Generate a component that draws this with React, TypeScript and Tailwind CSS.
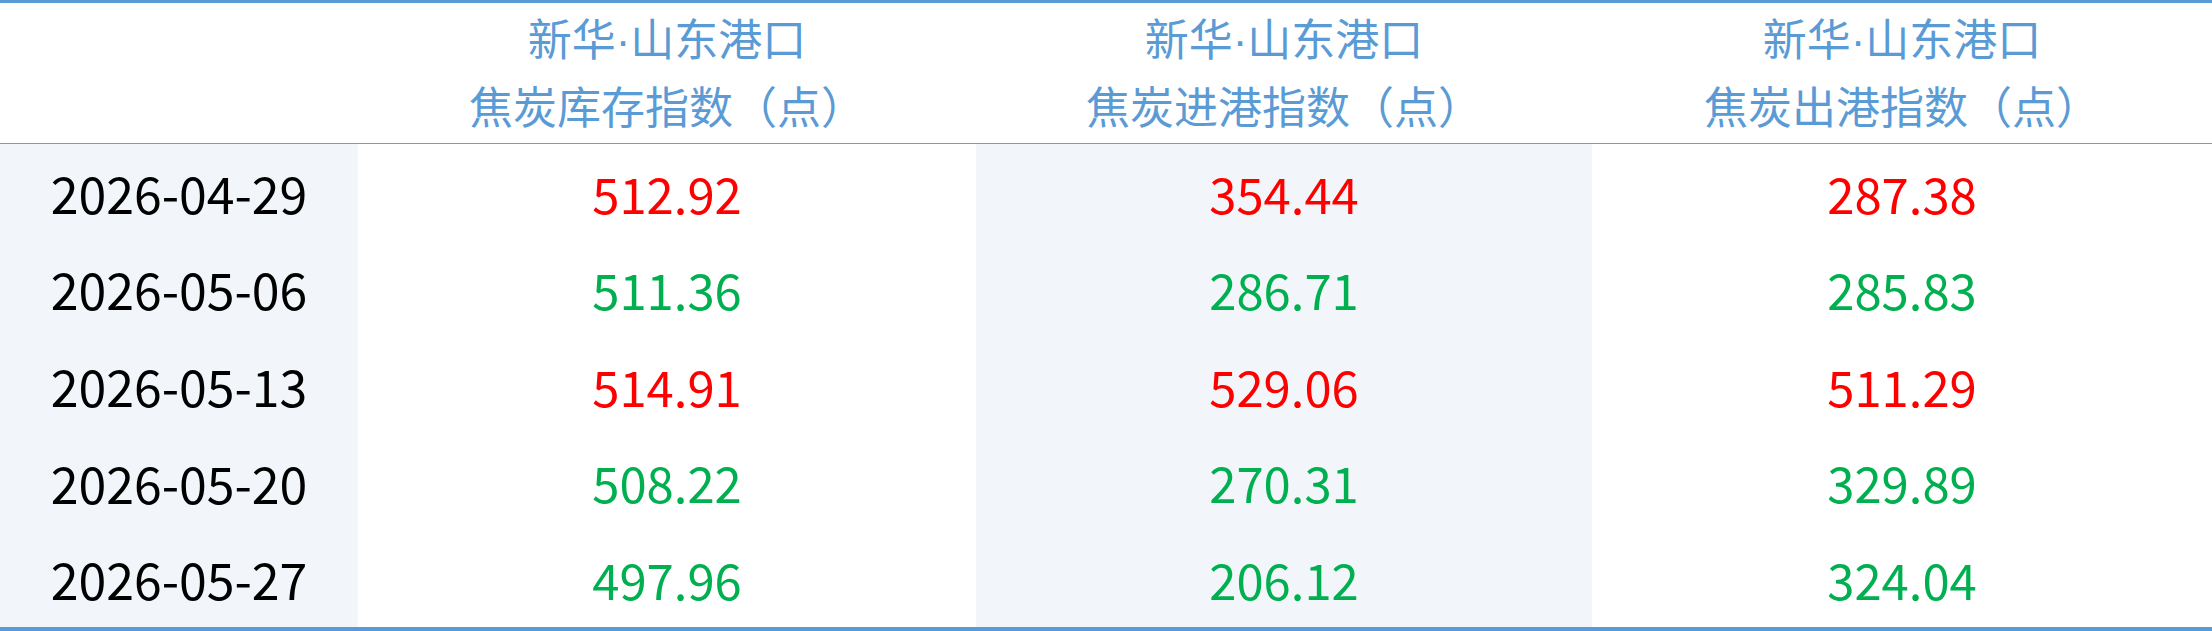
const headers = [
  ['新华·山东港口', '焦炭库存指数（点）'],
  ['新华·山东港口', '焦炭进港指数（点）'],
  ['新华·山东港口', '焦炭出港指数（点）'],
];

const rows: [string, number[], boolean][] = [
  ['2026-04-29', [512.92, 354.44, 287.38], true],
  ['2026-05-06', [511.36, 286.71, 285.83], false],
  ['2026-05-13', [514.91, 529.06, 511.29], true],
  ['2026-05-20', [508.22, 270.31, 329.89], false],
  ['2026-05-27', [497.96, 206.12, 324.04], false],
];

const font = { fontFamily: '"Noto Sans CJK SC", "Noto Sans", sans-serif' };
const headFont = { fontFamily: '"Liberation Sans", "Noto Sans CJK SC", sans-serif' };

export default function App() {
  return (
    <div
      className="w-[2212px] h-[631px] bg-white border-t-[3px] border-b-4 border-[#5b9bd5] flex flex-col"
      style={font}
    >
      <div className="grid grid-cols-[358px_618px_616px_620px] h-[141px] border-b border-[#6a9fd4] shrink-0">
        <div />
        {headers.map((h, i) => (
          <div
            key={i}
            className="flex flex-col items-center justify-center text-[44px] leading-[68px] text-[#5b9bd5] pt-[3px]"
            style={headFont}
          >
            <span>{h[0]}</span>
            <span>{h[1]}</span>
          </div>
        ))}
      </div>
      <div className="flex-1 grid grid-cols-[358px_618px_616px_620px] grid-rows-5">
        {rows.map(([date, vals, up]) => (
          <div key={date} className="contents">
            <div className="bg-[#f2f6fb] flex items-center justify-center text-[50px] text-black">{date}</div>
            {vals.map((v, j) => (
              <div
                key={j}
                className={`flex items-center justify-center text-[49px] ${j === 1 ? 'bg-[#f2f6fb]' : 'bg-white'} ${up ? 'text-[#ff0000]' : 'text-[#00b050]'}`}
              >
                {v.toFixed(2)}
              </div>
            ))}
          </div>
        ))}
      </div>
    </div>
  );
}
